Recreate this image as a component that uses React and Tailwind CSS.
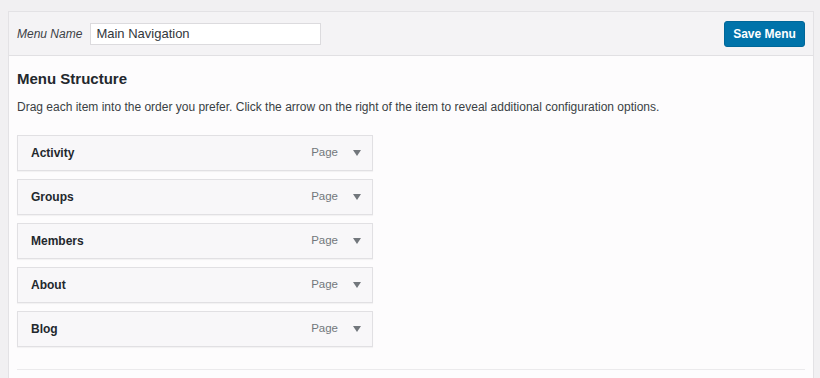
import React from "react";

const items = ["Activity", "Groups", "Members", "About", "Blog"];

function Caret() {
  return (
    <svg width="8" height="6" viewBox="0 0 8 6" className="block">
      <path d="M0 0 L8 0 L4 6 Z" fill="#72777c" />
    </svg>
  );
}

export default function App() {
  return (
    <div
      className="w-[820px] h-[378px] overflow-hidden bg-[#f1f0f2] pt-[11px] pl-[8px] pr-[6px]"
      style={{ fontFamily: '"Liberation Sans", Arial, sans-serif' }}
    >
      <div className="h-[400px] border border-[#e3e2e5] bg-[#fdfcfd]">
        <div className="flex h-[44px] items-center justify-between border-b border-[#e1e0e3] bg-[#f4f3f5] pl-[8px] pr-[8px]">
          <div className="flex items-center">
            <span className="text-[12px] italic text-[#3c4146]">Menu Name</span>
            <div className="ml-[8px] flex h-[22px] w-[231px] items-center border border-[#dcdbde] bg-white pl-[5px] text-[13px] text-[#32373c]">
              Main Navigation
            </div>
          </div>
          <button className="h-[26px] w-[81px] rounded-[3px] border border-[#006799] bg-[#0073aa] text-[12px] font-semibold text-white">
            Save Menu
          </button>
        </div>
        <div className="px-[8px] pt-[12px]">
          <h3 className="text-[15px] font-bold text-[#23282d]">Menu Structure</h3>
          <p className="mt-[7px] text-[12px] text-[#3a3f44]">
            Drag each item into the order you prefer. Click the arrow on the right of the item to reveal additional configuration options.
          </p>
          <div className="mt-[19px] flex w-[356px] flex-col gap-[8px]">
            {items.map((it) => (
              <div
                key={it}
                className="flex h-[36px] items-center border border-[#e1e0e3] bg-[#f8f7f9] pl-[13px] pr-[11px] shadow-[0_1px_1px_rgba(0,0,0,0.04)]"
              >
                <span className="flex-1 text-[12px] font-bold text-[#23282d]">{it}</span>
                <span className="text-[11.5px] text-[#72777c]">Page</span>
                <span className="ml-[15px]">
                  <Caret />
                </span>
              </div>
            ))}
          </div>
          <div className="mt-[22px] border-t border-[#ebeaec]"></div>
        </div>
      </div>
    </div>
  );
}
